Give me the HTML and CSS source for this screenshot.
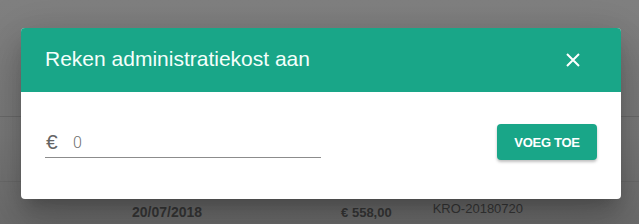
FILE: index.html
```html
<!DOCTYPE html>
<html lang="nl">
<head>
    <meta charset="UTF-8">
    <title>Administratiekost</title>
    <link rel="stylesheet" href="styles.css">
</head>
<body>
    <div class="page">
        <div class="row"></div>
        <div class="row"></div>
        <div class="row last">
            <span class="cell date">20/07/2018</span>
            <span class="cell amount">€ 558,00</span>
            <span class="cell ref">KRO-20180720</span>
        </div>
    </div>

    <!-- dialog over the dimmed page -->
    <div class="dialog">
        <div class="dialog-header">
            <h2>Reken administratiekost aan</h2>
            <button class="close-btn" aria-label="Sluiten">
                <svg width="14" height="14" viewBox="0 0 14 14">
                    <path d="M1 1 L13 13 M13 1 L1 13" stroke="#fff" stroke-width="2" fill="none"/>
                </svg>
            </button>
        </div>
        <div class="dialog-body">
            <label class="money-field">
                <span class="currency">€</span>
                <input type="text" value="0">
            </label>
            <button class="add-btn">VOEG TOE</button>
        </div>
    </div>
</body>
</html>
```

FILE: styles.css
```css
* {
    margin: 0;
    padding: 0;
    box-sizing: border-box;
}
body {
    width: 639px;
    height: 224px;
    overflow: hidden;
    background: #7d7d7d;
    font-family: "Liberation Sans", Arial, sans-serif;
    position: relative;
}
.page {
    padding-top: 52px;
    background: linear-gradient(#808080, #7a7a7a 60%, #6c6c6c);
    height: 224px;
}
.row {
    height: 65px;
    border-bottom: 1px solid #6b6b6b;
}
.row.last {
    border-bottom: none;
    display: flex;
    align-items: flex-end;
    height: 40px;
    padding-bottom: 2px;
}
.cell {
    font-size: 13px;
    color: #383838;
}
.date {
    margin-left: 132px;
    font-weight: bold;
    font-size: 14px;
}
.amount {
    margin-left: 139px;
    font-weight: bold;
}
.ref {
    margin-left: 41px;
    padding-bottom: 4px;
}

.dialog {
    position: absolute;
    top: 28px;
    left: 21px;
    width: 600px;
    height: 171px;
    background: #fff;
    border-radius: 4px;
    overflow: hidden;
    box-shadow: 0 11px 15px -7px rgba(0, 0, 0, 0.2), 0 24px 38px 3px rgba(0, 0, 0, 0.14), 0 9px 46px 8px rgba(0, 0, 0, 0.12);
}
.dialog-header {
    height: 64px;
    background: #19a688;
    display: flex;
    align-items: center;
    justify-content: space-between;
    padding: 0 41px 0 24px;
}
.dialog-header h2 {
    font-size: 21px;
    font-weight: normal;
    color: #f4fffb;
    margin-top: -2px;
}
.close-btn {
    background: none;
    border: none;
    width: 14px;
    height: 14px;
    display: flex;
    cursor: pointer;
}
.dialog-body {
    display: flex;
    align-items: center;
    justify-content: space-between;
    padding: 32px 24px 0 24px;
}
.money-field {
    width: 276px;
    display: flex;
    align-items: center;
    border-bottom: 1px solid #8c8c8c;
    padding-bottom: 3px;
    margin-top: 4px;
}
.currency {
    font-family: "Liberation Sans", Arial, sans-serif;
    font-size: 21px;
    color: #666;
    width: 28px;
    padding-left: 1px;
}
.money-field input {
    border: none;
    outline: none;
    width: 200px;
    font-family: Roboto, sans-serif;
    font-weight: 300;
    font-size: 16px;
    color: #6f6f6f;
    background: transparent;
}
.add-btn {
    width: 100px;
    height: 36px;
    background: #19a688;
    color: #fff;
    border: none;
    border-radius: 4px;
    font-family: "Liberation Sans", Arial, sans-serif;
    font-size: 13px;
    font-weight: bold;
    letter-spacing: -0.3px;
    box-shadow: 0 2px 3px rgba(0, 0, 0, 0.25);
    cursor: pointer;
}
```
